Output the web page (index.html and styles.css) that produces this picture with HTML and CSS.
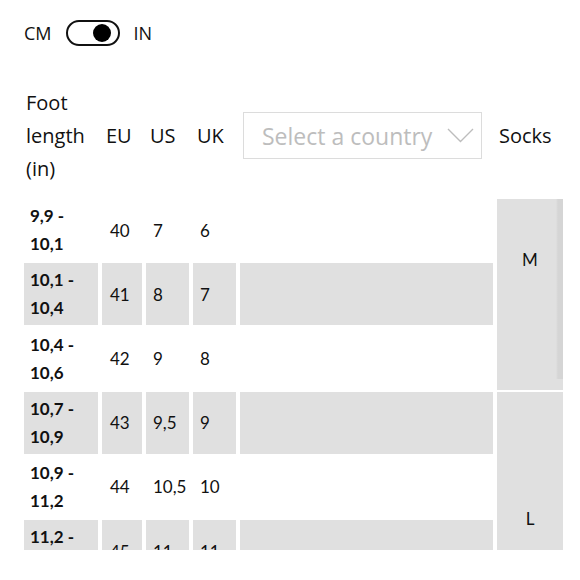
FILE: index.html
```html
<!DOCTYPE html>
<html lang="en">
<head>
<meta charset="utf-8">
<title>Size chart</title>
<link rel="stylesheet" href="styles.css">
</head>
<body>
<div class="page">
  <div class="units">
    <span class="unit">CM</span>
    <span class="switch"><span class="knob"></span></span>
    <span class="unit">IN</span>
  </div>
  <div class="table-wrap">
    <div class="grid">
      <div class="hcell h-foot sep">Foot<br>length<br>(in)</div>
      <div class="hcell h-sys sep">EU</div>
      <div class="hcell h-sys sep">US</div>
      <div class="hcell h-sys sep">UK</div>
      <div class="hcell h-select sep">
        <div class="select">
          <span class="placeholder">Select a country</span>
          <svg class="chev" width="27" height="15" viewBox="0 0 27 15"><path d="M1 1 L13.5 13.5 L26 1" fill="none" stroke="#bdbdbd" stroke-width="1.4"/></svg>
        </div>
      </div>
      <div class="hcell h-socks">Socks</div>

      <div class="cell foot">9,9 -<br>10,1</div>
      <div class="cell num eu">40</div>
      <div class="cell num us">7</div>
      <div class="cell num uk">6</div>
      <div class="cell blank"></div>
      <div class="socks socks-m">M</div>

      <div class="cell foot g">10,1 -<br>10,4</div>
      <div class="cell num eu g">41</div>
      <div class="cell num us g">8</div>
      <div class="cell num uk g">7</div>
      <div class="cell blank g"></div>

      <div class="cell foot">10,4 -<br>10,6</div>
      <div class="cell num eu">42</div>
      <div class="cell num us">9</div>
      <div class="cell num uk">8</div>
      <div class="cell blank"></div>

      <div class="cell foot g">10,7 -<br>10,9</div>
      <div class="cell num eu g">43</div>
      <div class="cell num us g">9,5</div>
      <div class="cell num uk g">9</div>
      <div class="cell blank g"></div>
      <div class="socks socks-l">L</div>

      <div class="cell foot">10,9 -<br>11,2</div>
      <div class="cell num eu">44</div>
      <div class="cell num us">10,5</div>
      <div class="cell num uk">10</div>
      <div class="cell blank"></div>

      <div class="cell foot g">11,2 -<br>11,5</div>
      <div class="cell num eu g">45</div>
      <div class="cell num us g">11</div>
      <div class="cell num uk g">11</div>
      <div class="cell blank g"></div>
    </div>
  </div>
</div>
</body>
</html>
```
FILE: styles.css
```css
html, body {
  margin: 0;
  padding: 0;
  background: #ffffff;
}

body {
  font-family: "Open Sans", "Noto Sans", sans-serif;
  color: #111111;
}

.page {
  padding: 0 17px 0 24px;
}

.units {
  display: flex;
  align-items: center;
  height: 26px;
  padding-top: 20px;
  gap: 14px;
}

.unit {
  font-size: 18px;
  line-height: 26px;
  color: #111;
}

.switch {
  box-sizing: border-box;
  width: 54px;
  height: 26px;
  border: 2px solid #111;
  border-radius: 13px;
  display: flex;
  align-items: center;
  justify-content: flex-end;
  padding-right: 7px;
  margin-left: 0;
}

.knob {
  width: 18px;
  height: 18px;
  border-radius: 50%;
  background: #000;
}

.table-wrap {
  margin-top: 40px;
  height: 464px;
  overflow: hidden;
}

.grid {
  display: grid;
  grid-template-columns: 74px 40px 43px 43px 253px 66px;
  grid-template-rows: 111px;
  grid-auto-rows: 62px;
  column-gap: 4px;
  row-gap: 2.2px;
}

.hcell {
  font-size: 20px;
  line-height: 33px;
  color: #111;
}

.sep {
  background-image: linear-gradient(#ececec, #ececec);
  background-repeat: no-repeat;
  background-size: 1px 34px;
  background-position: right 0 top 32px;
}

.h-sys.sep, .h-foot.sep {
  background-position: right -2px top 32px;
}

.h-foot {
  padding-left: 2px;
}

.h-sys {
  padding-top: 33px;
  padding-left: 4px;
}

.h-select {
  padding-top: 26px;
  background-position: right -1px top 32px;
}

.select {
  box-sizing: border-box;
  margin-left: 3px;
  width: 239px;
  height: 47px;
  border: 1px solid #dcdcdc;
  display: flex;
  align-items: center;
  justify-content: space-between;
  padding: 0 7px 0 18px;
}

.placeholder {
  font-size: 23px;
  color: #bdbdbd;
  line-height: 30px;
  white-space: nowrap;
}

.chev {
  display: block;
}

.h-socks {
  padding-top: 33px;
  padding-left: 2px;
}

.cell {
  display: flex;
  align-items: center;
  font-family: "Lato", "Open Sans", sans-serif;
  font-size: 17px;
  color: #111;
}

.cell.g {
  background: #e0e0e0;
}

.foot {
  font-weight: 700;
  line-height: 28px;
  padding-left: 6px;
}

.num {
  padding-left: 7px;
}

.eu {
  padding-left: 8px;
}

.socks {
  background-color: #e0e0e0;
  display: flex;
  justify-content: center;
  font-family: "Lato", "Open Sans", sans-serif;
  font-size: 17px;
  line-height: 20px;
  color: #111;
}

.socks-m {
  grid-column: 6;
  grid-row: 2 / span 3;
  align-items: flex-start;
  padding-top: 51px;
  box-sizing: border-box;
  background-image: linear-gradient(to right, rgba(0,0,0,0) 0, rgba(0,0,0,0) 59px, rgba(0,0,0,0.05) 61px, rgba(0,0,0,0.05) 66px);
  background-repeat: no-repeat;
  background-size: 100% calc(100% - 11px);
}

.socks-l {
  grid-column: 6;
  grid-row: 5 / span 4;
  align-items: center;
}
```
